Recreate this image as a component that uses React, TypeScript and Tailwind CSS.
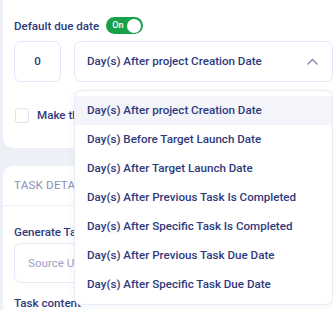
import React from 'react';

const options = [
  'Day(s) After project Creation Date',
  'Day(s) Before Target Launch Date',
  'Day(s) After Target Launch Date',
  'Day(s) After Previous Task Is Completed',
  'Day(s) After Specific Task Is Completed',
  'Day(s) After Previous Task Due Date',
  'Day(s) After Specific Task Due Date',
];

export default function App() {
  return (
    <div
      className="w-[333px] h-[310px] overflow-hidden bg-[#eef0f7] pl-[3px] text-[#2f3a7c]"
      style={{ fontFamily: 'Roboto, "Liberation Sans", sans-serif' }}
    >
      <div className="w-[360px]">
        {/* due date card */}
        <div className="bg-white rounded-b-[10px] pl-[11px] pt-[17px] pb-[24px]">
          <div className="flex items-center gap-[7px] h-[17px]">
            <span className="text-[11.6px] font-medium leading-4">Default due date</span>
            <button className="flex items-center justify-between w-[37px] h-[17px] rounded-full bg-[#17a14a] pl-[6px] pr-[2px]">
              <span className="text-[9px] font-medium text-white leading-none">On</span>
              <span className="w-[14px] h-[14px] rounded-full bg-white" />
            </button>
          </div>

          <div className="flex gap-[13px] mt-[7px]">
            <div className="w-[47px] h-[41px] rounded-[7px] border border-[#e3e6f6] flex items-center justify-center text-[11.6px] font-medium">
              0
            </div>
            <div className="relative w-[259px]">
              <div className="h-[41px] rounded-[7px] border border-[#e3e6f6] flex items-center justify-between pl-[12px] pr-[14px]">
                <span className="text-[11.6px] font-medium">{options[0]}</span>
                <svg width="11" height="7" viewBox="0 0 11 7" fill="none">
                  <path d="M1 6L5.5 1.5L10 6" stroke="#7e85ab" strokeWidth="1.4" strokeLinecap="round" strokeLinejoin="round" />
                </svg>
              </div>

              <div className="absolute left-0 top-[49px] z-10 w-[259px] bg-white rounded-[7px] border border-[#e8eaf4] shadow-[0_2px_6px_rgba(40,50,110,0.06)] pt-[5px] pb-[5px]">
                {options.map((o, i) => (
                  <div
                    key={o}
                    className={`h-[29px] flex items-center pl-[12px] text-[11.6px] font-medium ${i === 0 ? 'bg-[#f4f5fa]' : ''}`}
                  >
                    {o}
                  </div>
                ))}
              </div>
            </div>
          </div>

          <div className="flex items-center gap-[8px] mt-[25px] pl-[1px]">
            <span className="w-[14px] h-[15px] rounded-[3px] border border-[#dfe2f0] bg-white" />
            <span className="text-[11.6px] font-medium">Make this task mandatory</span>
          </div>
        </div>

        {/* task details card */}
        <div className="bg-white rounded-t-[10px] mt-[18px]">
          <div className="h-[40px] flex items-center pl-[11px] border-b border-[#eef0f6] text-[11.6px] text-[#8a90b9] tracking-[0.2px]">
            TASK DETAILS
          </div>
          <div className="pl-[11px] pt-[18px]">
            <div className="text-[11.6px] font-medium leading-4">Generate Task From Source</div>
            <div className="mt-[3px] w-[300px] h-[40px] rounded-[7px] border border-[#e6e8f4] flex items-center pl-[13px] text-[11.6px] text-[#9ba1c4]">
              Source URL
            </div>
            <div className="mt-[12px] text-[11.6px] font-medium leading-4">Task content</div>
          </div>
        </div>
      </div>
    </div>
  );
}
